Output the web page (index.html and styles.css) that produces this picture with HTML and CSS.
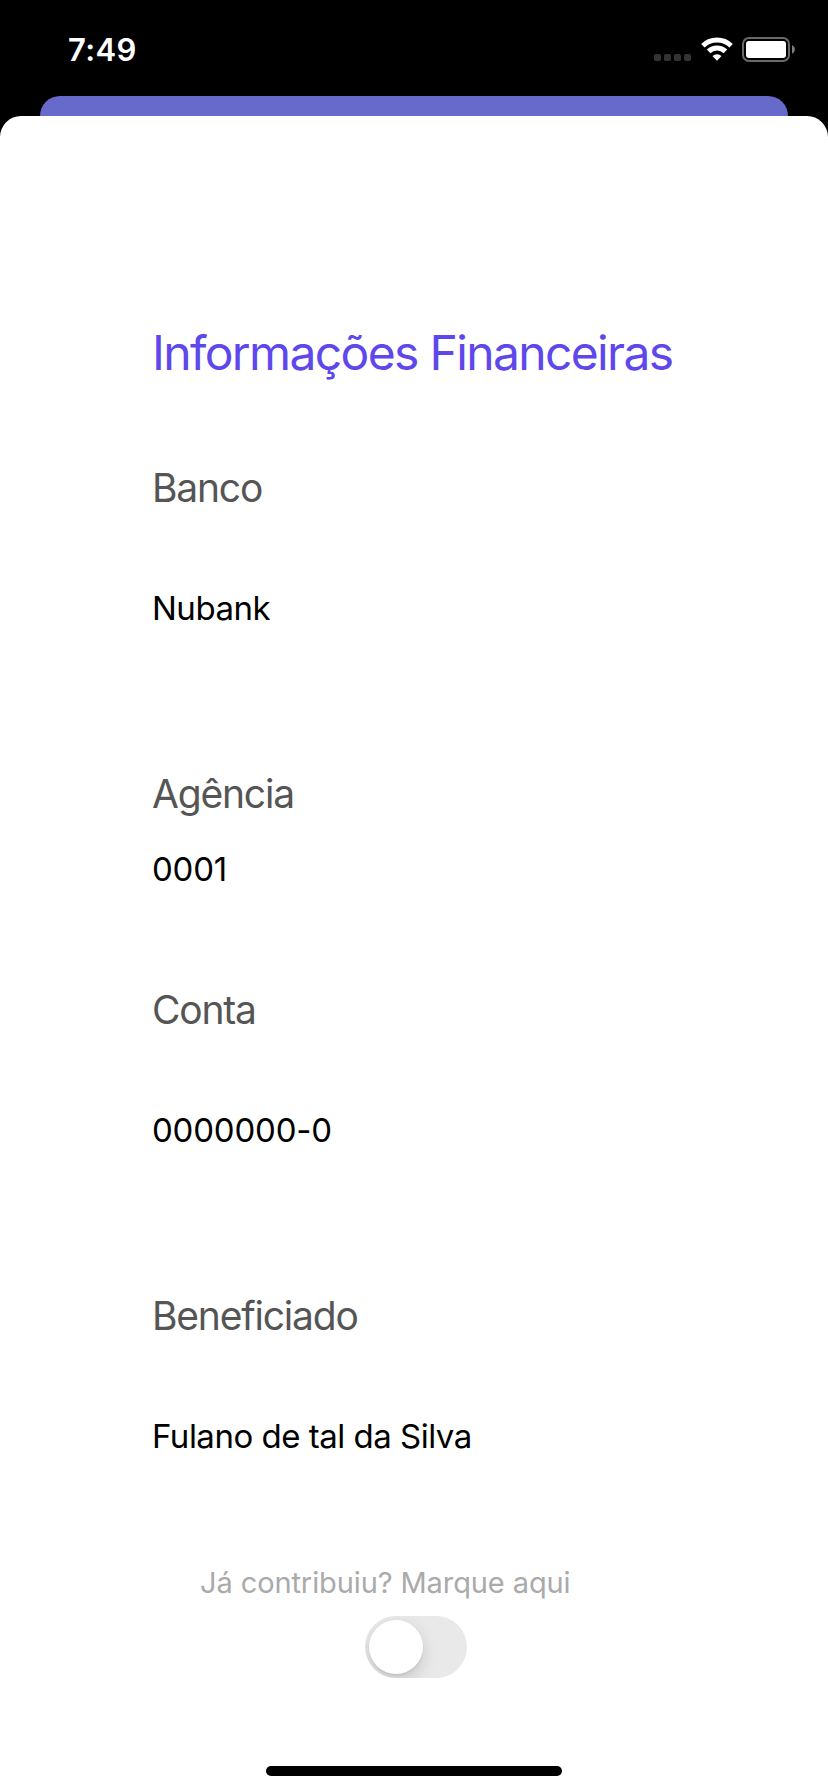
FILE: index.html
```html
<!DOCTYPE html>
<html lang="pt-BR">
<head>
<meta charset="utf-8">
<title>Informações Financeiras</title>
<link rel="stylesheet" href="styles.css">
</head>
<body>
<div class="screen">
  <header class="status">
    <span class="time">7:49</span>
    <div class="indicators">
      <svg class="dots" viewBox="0 0 37 7"><g fill="#333"><rect width="7" height="7" rx="1.8"/><rect x="10" width="7" height="7" rx="1.8"/><rect x="20" width="7" height="7" rx="1.8"/><rect x="30" width="7" height="7" rx="1.8"/></g></svg>
      <svg class="wifi" viewBox="0 0 32 24"><g fill="none" stroke="#fff" stroke-width="5"><path d="M1.9 8.7a20.2 20.2 0 0 1 28.2 0"/><path d="M7.6 14.4a12.1 12.1 0 0 1 16.8 0"/></g><path fill="#fff" d="M11.5 19.1a6.6 6.6 0 0 1 9 0L16.5 23.3a.7.7 0 0 1-1 0z"/></svg>
      <svg class="battery" viewBox="0 0 53 25"><rect x="1" y="1" width="46" height="23" rx="6" fill="none" stroke="#696969" stroke-width="2"/><rect x="4" y="4" width="40" height="17" rx="3" fill="#fff"/><path fill="#808080" d="M50 8.2q2.8 1.2 2.8 4.3T50 16.8z"/></svg>
    </div>
  </header>
  <div class="backdrop"></div>
  <main class="sheet">
    <h1 class="title">Informações Financeiras</h1>
    <dl class="details">
      <div class="field"><dt class="label">Banco</dt><dd class="value">Nubank</dd></div>
      <div class="field tight"><dt class="label">Agência</dt><dd class="value digits">0001</dd></div>
      <div class="field"><dt class="label">Conta</dt><dd class="value digits">0000000-0</dd></div>
      <div class="field"><dt class="label">Beneficiado</dt><dd class="value">Fulano de tal da Silva</dd></div>
    </dl>
    <label class="hint" for="paid">Já contribuiu? Marque aqui</label>
    <button class="switch" id="paid" role="switch" aria-checked="false"><span class="knob"></span></button>
    <div class="home"></div>
  </main>
</div>
</body>
</html>
```
FILE: styles.css
```css
* { box-sizing: border-box; }
body { margin: 0; background: #000; font-family: Inter, "Liberation Sans", sans-serif; }
.screen { display: flex; flex-direction: column; height: 1792px; overflow: hidden; }
.status { display: flex; justify-content: space-between; align-items: flex-start; height: 96px; padding: 37px 33px 0 68px; color: #fff; }
.time { font-size: 31px; line-height: 26px; font-weight: 600; letter-spacing: .4px; }
.indicators { display: flex; align-items: flex-start; }
.dots { width: 37px; height: 7px; margin: 17px 10px 0 0; }
.wifi { width: 32px; height: 24px; margin-right: 9px; }
.battery { width: 53px; height: 25px; }
.backdrop { flex: none; height: 44px; margin: 0 40px -24px; border-radius: 20px 20px 0 0; background: #6769cb; }
.sheet { position: relative; flex: 1; display: flex; flex-direction: column; align-items: flex-start; padding: 207px 0 16px 152px; border-radius: 21px 21px 0 0; background: #fff; }
.title { margin: 0 0 81px; font-size: 48px; line-height: 60px; font-weight: 400; letter-spacing: -1.64px; color: #5e48eb; white-space: nowrap; }
.details { display: flex; flex-direction: column; gap: 97px; margin: 0; white-space: nowrap; }
.field { display: flex; flex-direction: column; gap: 76px; height: 164px; }
.field:first-child { margin-bottom: 45px; }
.field:nth-child(3) { margin-bottom: 45px; }
.tight { gap: 31px; height: 119px; }
.label { font-size: 39px; line-height: 48px; letter-spacing: -1.2px; color: #555; }
.value { margin: 0; font-size: 33px; line-height: 40px; letter-spacing: -.5px; color: #000; }
.digits { letter-spacing: -.2px; }
.hint { margin: 109px 0 0 48px; font-size: 29px; line-height: 36px; letter-spacing: -.1px; color: #aaa; white-space: nowrap; }
.switch { width: 102px; height: 62px; margin: 15px 0 0 213px; padding: 4px; border: 0; border-radius: 31px; background: #e9e9e9; overflow: hidden; }
.knob { display: block; width: 54px; height: 54px; border-radius: 50%; background: #fff; box-shadow: 0 6px 16px rgba(0, 0, 0, .15), 0 2px 2px rgba(0, 0, 0, .06); }
.home { width: 296px; height: 10px; margin: auto 0 0 114px; border-radius: 5px; background: #000; }
```
